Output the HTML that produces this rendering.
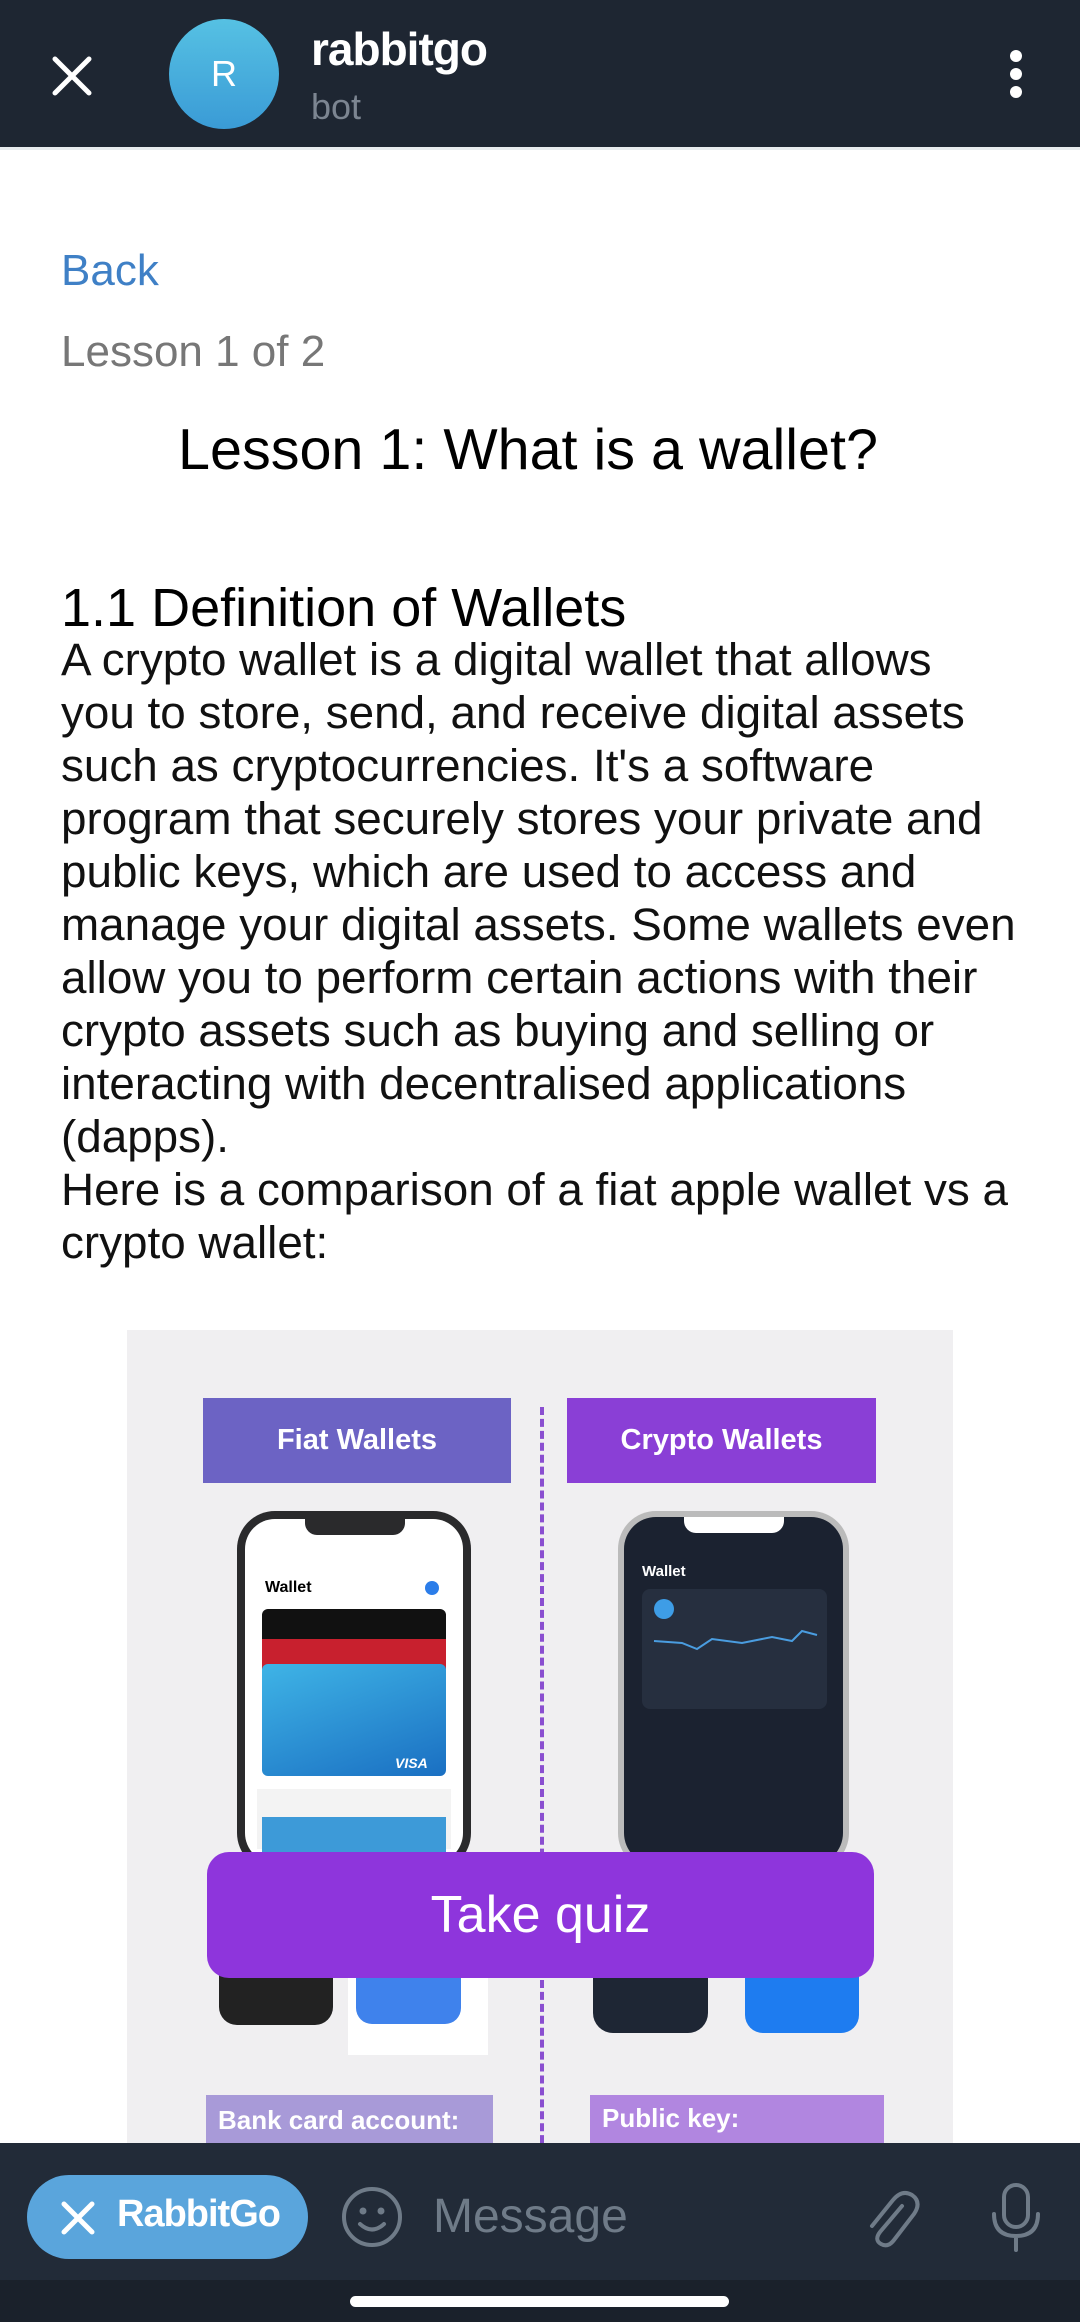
<!DOCTYPE html>
<html><head><meta charset="utf-8"><style>
*{margin:0;padding:0;box-sizing:border-box}
body{width:1080px;height:2322px;overflow:hidden;background:#fff;font-family:"Liberation Sans",sans-serif;position:relative}
.abs{position:absolute}
.hdr{left:0;top:0;width:1080px;height:147px;background:#1e2632}
.line{white-space:nowrap;font-size:45.8px;color:#111;left:61px}
.dot{left:1010px;width:12px;height:12px;border-radius:50%;background:#fff}
</style></head><body>
<div class="abs hdr"></div>
<svg class="abs" style="left:50px;top:54px" width="44" height="44" viewBox="0 0 44 44"><path d="M5 5L39 39M39 5L5 39" stroke="#fff" stroke-width="5" stroke-linecap="round"/></svg>
<div class="abs" style="left:169px;top:19px;width:110px;height:110px;border-radius:50%;background:linear-gradient(#56c1e3,#3a9bd6);color:#fff;font-size:36px;line-height:110px;text-align:center">R</div>
<div class="abs" style="left:311px;top:22px;color:#fff;font-size:46px;font-weight:bold;letter-spacing:-1px">rabbitgo</div>
<div class="abs" style="left:311px;top:86px;color:#7c8591;font-size:36px">bot</div>
<div class="abs dot" style="top:50px"></div>
<div class="abs dot" style="top:68px"></div>
<div class="abs dot" style="top:86px"></div>
<div class="abs" style="left:0;top:147px;width:1080px;height:3px;background:#e8ecef"></div>

<div class="abs" style="left:61px;top:246px;font-size:44px;color:#3f80c6">Back</div>
<div class="abs" style="left:61px;top:327px;font-size:44px;color:#777">Lesson 1 of 2</div>
<div class="abs" style="left:178px;top:417px;font-size:57.5px;color:#000;white-space:nowrap">Lesson 1: What is a wallet?</div>
<div class="abs" style="left:61px;top:577px;font-size:54px;color:#000;white-space:nowrap">1.1 Definition of Wallets</div>

<div class="abs line" style="top:634px">A crypto wallet is a digital wallet that allows</div>
<div class="abs line" style="top:687px">you to store, send, and receive digital assets</div>
<div class="abs line" style="top:740px">such as cryptocurrencies. It's a software</div>
<div class="abs line" style="top:793px">program that securely stores your private and</div>
<div class="abs line" style="top:846px">public keys, which are used to access and</div>
<div class="abs line" style="top:899px">manage your digital assets. Some wallets even</div>
<div class="abs line" style="top:952px">allow you to perform certain actions with their</div>
<div class="abs line" style="top:1005px">crypto assets such as buying and selling or</div>
<div class="abs line" style="top:1058px">interacting with decentralised applications</div>
<div class="abs line" style="top:1111px">(dapps).</div>
<div class="abs line" style="top:1164px">Here is a comparison of a fiat apple wallet vs a</div>
<div class="abs line" style="top:1217px">crypto wallet:</div>

<div class="abs" style="left:127px;top:1330px;width:826px;height:820px;background:#f0eff1;overflow:hidden">
  <div class="abs" style="left:76px;top:68px;width:308px;height:85px;background:#6c63c4;color:#fff;font-weight:bold;font-size:29px;text-align:center;line-height:85px">Fiat Wallets</div>
  <div class="abs" style="left:440px;top:68px;width:309px;height:85px;background:#8a3fd6;color:#fff;font-weight:bold;font-size:29px;text-align:center;line-height:85px">Crypto Wallets</div>
  <div class="abs" style="left:413px;top:77px;width:0;height:760px;border-left:4px dashed #8a4fd0"></div>
  <div class="abs" style="left:110px;top:181px;width:234px;height:360px;border-radius:38px;background:#2a2a2c;padding:8px">
    <div style="width:100%;height:100%;border-radius:30px;background:#fff;position:relative;overflow:hidden">
      <div class="abs" style="left:60px;top:0;width:100px;height:16px;background:#2a2a2c;border-radius:0 0 12px 12px"></div>
      <div class="abs" style="left:20px;top:60px;font-size:16px;font-weight:bold">Wallet</div>
      <div class="abs" style="left:180px;top:62px;width:14px;height:14px;border-radius:50%;background:#2b7de9"></div>
      <div class="abs" style="left:17px;top:90px;width:184px;height:30px;background:#111;border-radius:6px 6px 0 0"></div>
      <div class="abs" style="left:17px;top:120px;width:184px;height:30px;background:#c8202e"></div>
      <div class="abs" style="left:17px;top:145px;width:184px;height:112px;background:linear-gradient(160deg,#3fb4e6,#1a6fc2);border-radius:6px"></div>
      <div class="abs" style="left:150px;top:236px;color:#fff;font-weight:bold;font-style:italic;font-size:14px">VISA</div>
      <div class="abs" style="left:12px;top:270px;width:194px;height:60px;background:#f3f3f3"></div>
      <div class="abs" style="left:17px;top:298px;width:184px;height:40px;background:#3d9ad8"></div>
    </div>
  </div>
  <div class="abs" style="left:491px;top:181px;width:231px;height:360px;border-radius:38px;background:#bbb;padding:6px">
    <div style="width:100%;height:100%;border-radius:32px;background:#1b2230;position:relative;overflow:hidden">
      <div class="abs" style="left:60px;top:0;width:100px;height:16px;background:#fff;border-radius:0 0 12px 12px"></div>
      <div class="abs" style="left:18px;top:46px;color:#fff;font-size:15px;font-weight:bold">Wallet</div>
      <div class="abs" style="left:18px;top:72px;width:185px;height:120px;background:#262f3f;border-radius:8px"></div>
      <div class="abs" style="left:30px;top:82px;width:20px;height:20px;border-radius:50%;background:#3e9de6"></div>
      <svg class="abs" style="left:28px;top:110px" width="170" height="30"><path d="M2 14 L30 16 L45 22 L60 12 L90 16 L120 10 L140 14 L150 4 L165 8" stroke="#4a9de0" stroke-width="2" fill="none"/></svg>
    </div>
  </div>
  <div class="abs" style="left:92px;top:630px;width:114px;height:65px;background:#222;border-radius:0 0 18px 18px"></div>
  <div class="abs" style="left:221px;top:640px;width:140px;height:85px;background:#fff"></div>
  <div class="abs" style="left:229px;top:630px;width:105px;height:64px;background:#3f82ec;border-radius:0 0 16px 16px"></div>
  <div class="abs" style="left:466px;top:630px;width:115px;height:73px;background:#1e2634;border-radius:0 0 20px 20px"></div>
  <div class="abs" style="left:618px;top:630px;width:114px;height:73px;background:#1e7cf0;border-radius:0 0 18px 18px"></div>
  <div class="abs" style="left:79px;top:765px;width:287px;height:60px;background:#a89ad8;color:#fff;font-weight:bold;font-size:26px;padding:10px 12px;white-space:nowrap">Bank card account:</div>
  <div class="abs" style="left:463px;top:765px;width:294px;height:60px;background:#b186e0;color:#fff;font-weight:bold;font-size:26px;padding:8px 12px">Public key:</div>
</div>

<div class="abs" style="left:207px;top:1852px;width:667px;height:126px;border-radius:22px;background:#8e35dc;color:#fff;font-size:52px;text-align:center;line-height:126px">Take quiz</div>

<div class="abs" style="left:0;top:2143px;width:1080px;height:137px;background:#222b38"></div>
<div class="abs" style="left:0;top:2280px;width:1080px;height:42px;background:#1a212b"></div>
<div class="abs" style="left:350px;top:2296px;width:379px;height:11px;border-radius:6px;background:#fff"></div>
<div class="abs" style="left:27px;top:2175px;width:281px;height:84px;border-radius:42px;background:#5aa5dc"></div>
<svg class="abs" style="left:60px;top:2200px" width="36" height="36"><path d="M4 4L32 32M32 4L4 32" stroke="#fff" stroke-width="5" stroke-linecap="round"/></svg>
<div class="abs" style="left:117px;top:2193px;color:#fff;font-size:38px;font-weight:bold;letter-spacing:-1px">RabbitGo</div>
<svg class="abs" style="left:340px;top:2185px" width="64" height="64" viewBox="0 0 64 64"><circle cx="32" cy="32" r="28" stroke="#6f7b88" stroke-width="4" fill="none"/><circle cx="23" cy="26" r="3.5" fill="#6f7b88"/><circle cx="41" cy="26" r="3.5" fill="#6f7b88"/><path d="M20 39Q32 50 44 39" stroke="#6f7b88" stroke-width="4" fill="none" stroke-linecap="round"/></svg>
<div class="abs" style="left:433px;top:2189px;color:#6f7b88;font-size:48px">Message</div>
<svg class="abs" style="left:862px;top:2184px" width="60" height="66" viewBox="0 0 60 66"><path d="M40 22 L18 48 Q12 56 19 60 Q26 64 32 56 L52 30 Q60 18 50 11 Q40 5 31 16 L10 42" stroke="#6f7b88" stroke-width="4" fill="none" stroke-linecap="round"/></svg>
<svg class="abs" style="left:990px;top:2182px" width="52" height="70" viewBox="0 0 52 70"><rect x="14" y="3" width="24" height="42" rx="12" stroke="#6f7b88" stroke-width="4" fill="none"/><path d="M4 32Q4 54 26 54Q48 54 48 32M26 54V68" stroke="#6f7b88" stroke-width="4" fill="none" stroke-linecap="round"/></svg>
</body></html>
